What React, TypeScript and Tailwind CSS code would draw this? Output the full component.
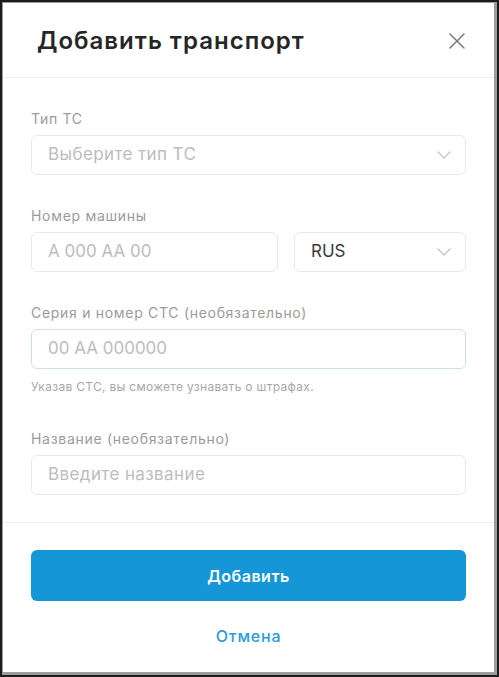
import React from 'react'

const Chevron = () => (
  <svg width="14" height="8" viewBox="0 0 14 8" fill="none" className="shrink-0">
    <path d="M1 1l6 6 6-6" stroke="#c4c4c4" strokeWidth="1.3" strokeLinecap="round" strokeLinejoin="round" />
  </svg>
)

const Label = ({ children }: { children: React.ReactNode }) => (
  <p className="mb-2 text-[14px] leading-4 tracking-[0.7px] text-[#9b9b9b]">{children}</p>
)

export default function App() {
  return (
    <div className="h-[677px] w-[499px] border-2 border-[#1c1c1c] bg-white font-['Inter',sans-serif]">
      <div className="flex h-full flex-col border-t border-l border-r-[3px] border-b-[3px] border-[#9c9c9c]">
        {/* Header */}
        <div className="flex h-[75px] items-center justify-between border-b border-[#efefef] pl-[34px] pr-[29px] pt-[2px]">
          <h1 className="text-[24px] font-semibold tracking-[1px] text-[#262626]">Добавить транспорт</h1>
          <button className="flex h-[16px] w-[16px] items-center justify-center">
            <svg width="16" height="16" viewBox="0 0 16 16" fill="none">
              <path d="M1 1l14 14M15 1L1 15" stroke="#7a7a7a" strokeWidth="1.5" strokeLinecap="round" />
            </svg>
          </button>
        </div>

        {/* Form */}
        <div className="border-b border-[#efefef] px-7 pt-[33px] pb-[27px]">
          <Label>Тип ТС</Label>
          <div className="flex h-10 items-center justify-between rounded-md border border-[#e9e9e9] pl-4 pr-[14px]">
            <span className="text-[17px] tracking-[0.4px] text-[#bdbdbd]">Выберите тип ТС</span>
            <Chevron />
          </div>

          <div className="mt-[33px]">
            <Label>Номер машины</Label>
            <div className="flex gap-4">
              <div className="flex h-10 w-[247px] items-center rounded-md border border-[#e9e9e9] pl-4">
                <span className="text-[17px] text-[#bdbdbd]">А 000 АА 00</span>
              </div>
              <div className="flex h-10 flex-1 items-center justify-between rounded-md border border-[#e9e9e9] pl-4 pr-[14px]">
                <span className="text-[17px] text-[#3a3a3a]">RUS</span>
                <Chevron />
              </div>
            </div>
          </div>

          <div className="mt-[33px]">
            <Label>Серия и номер СТС (необязательно)</Label>
            <div className="flex h-10 items-center rounded-md border border-[#c9e2f2] pl-4">
              <span className="text-[17px] text-[#bdbdbd]">00 АА 000000</span>
            </div>
            <p className="mt-[10px] text-[12px] leading-[15px] tracking-[0.3px] text-[#a8a8a8]">Указав СТС, вы сможете узнавать о штрафах.</p>
          </div>

          <div className="mt-[37px]">
            <Label>Название (необязательно)</Label>
            <div className="flex h-10 items-center rounded-md border border-[#e9e9e9] pl-4">
              <span className="text-[17px] tracking-[0.4px] text-[#bdbdbd]">Введите название</span>
            </div>
          </div>
        </div>

        {/* Footer */}
        <div className="flex flex-col items-center px-7 pt-[27px]">
          <button className="h-[51px] w-full rounded-md bg-[#1596d7] text-[16px] font-semibold tracking-[0.5px] text-white">Добавить</button>
          <button className="mt-[25px] text-[16px] leading-5 font-medium tracking-[0.8px] text-[#2e9bd8]">Отмена</button>
        </div>
      </div>
    </div>
  )
}
